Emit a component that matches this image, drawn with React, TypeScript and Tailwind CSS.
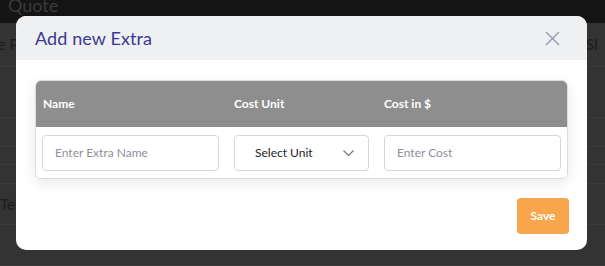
import * as React from "react"

const bgRows = [
  { h: "h-[44px]", left: "Type Price", right: "GSI" },
  { h: "h-[51px]", left: "", right: "" },
  { h: "h-[29px]", left: "", right: "" },
  { h: "h-[18px]", left: "", right: "" },
  { h: "h-[19px]", left: "", right: "" },
  { h: "h-[41px]", left: "Terms", right: "" },
  { h: "h-[41px]", left: "", right: "" },
]

export default function App() {
  return (
    <div className="relative w-[605px] h-[266px] overflow-hidden bg-[#333333] font-['Lato',sans-serif]">
      {/* page behind the modal */}
      <div className="h-[23px] bg-[#141414] px-2 text-[#3a3a3a] text-lg leading-[10px]">Quote</div>
      <div className="flex flex-col">
        {bgRows.map((r, i) => (
          <div
            key={i}
            className={`${r.h} flex items-center justify-between border-b border-[#3b3b3b] text-[15px] text-[#1c1c1c]`}
          >
            <span className={i === 0 ? "-ml-[26px]" : "ml-0"}>{r.left}</span>
            <span className="mr-[7px]">{r.right}</span>
          </div>
        ))}
      </div>

      {/* modal */}
      <div className="absolute left-[16px] top-[16px] w-[571px] h-[234px] rounded-[10px] bg-white overflow-hidden">
        <div className="h-[44px] bg-[#eff0f2] flex items-center justify-between pl-[19px] pr-[27px]">
          <h2 className="text-[18px] text-[#3b3993] tracking-[0.1px]">Add new Extra</h2>
          <svg width="15" height="15" viewBox="0 0 15 15" fill="none" stroke="#8d9ab1" strokeWidth="1.4">
            <path d="M1 1L14 14M14 1L1 14" />
          </svg>
        </div>

        <div className="px-[19px] pt-[20px]">
          <div className="rounded-[6px] border border-[#dcdcdc] shadow-[0_4px_14px_rgba(0,0,0,0.09)] overflow-hidden">
            <div className="h-[46px] bg-[#8e8e8e] grid grid-cols-[191px_150px_1fr] items-center text-white text-[12px] font-bold">
              <div className="pl-[7px]">Name</div>
              <div className="pl-[7px]">Cost Unit</div>
              <div className="pl-[7px]">Cost in $</div>
            </div>
            <div className="h-[51px] bg-white grid grid-cols-[191px_150px_1fr] items-center">
              <div className="pl-[6px]">
                <input
                  placeholder="Enter Extra Name"
                  className="w-[177px] h-[36px] rounded-[4px] border border-[#d6d6d6] px-[12px] text-[12px] placeholder:text-[#8f8f9c] outline-none"
                />
              </div>
              <div className="pl-[7px]">
                <div className="w-[135px] h-[36px] rounded-[4px] border border-[#d6d6d6] flex items-center justify-between pl-[20px] pr-[14px] text-[12px] text-[#222]">
                  <span>Select Unit</span>
                  <svg width="11" height="6" viewBox="0 0 11 6" fill="none" stroke="#7a7a7a" strokeWidth="1.2">
                    <path d="M0.5 0.5l5 5 5-5" />
                  </svg>
                </div>
              </div>
              <div className="pl-[7px]">
                <input
                  placeholder="Enter Cost"
                  className="w-[177px] h-[36px] rounded-[4px] border border-[#d6d6d6] px-[12px] text-[12px] placeholder:text-[#8f8f9c] outline-none"
                />
              </div>
            </div>
          </div>
        </div>

        <div className="flex justify-end pr-[18px] pt-[19px]">
          <button className="w-[52px] h-[36px] rounded-[4px] bg-[#f9a54b] text-white text-[12px] font-bold">
            Save
          </button>
        </div>
      </div>
    </div>
  )
}
